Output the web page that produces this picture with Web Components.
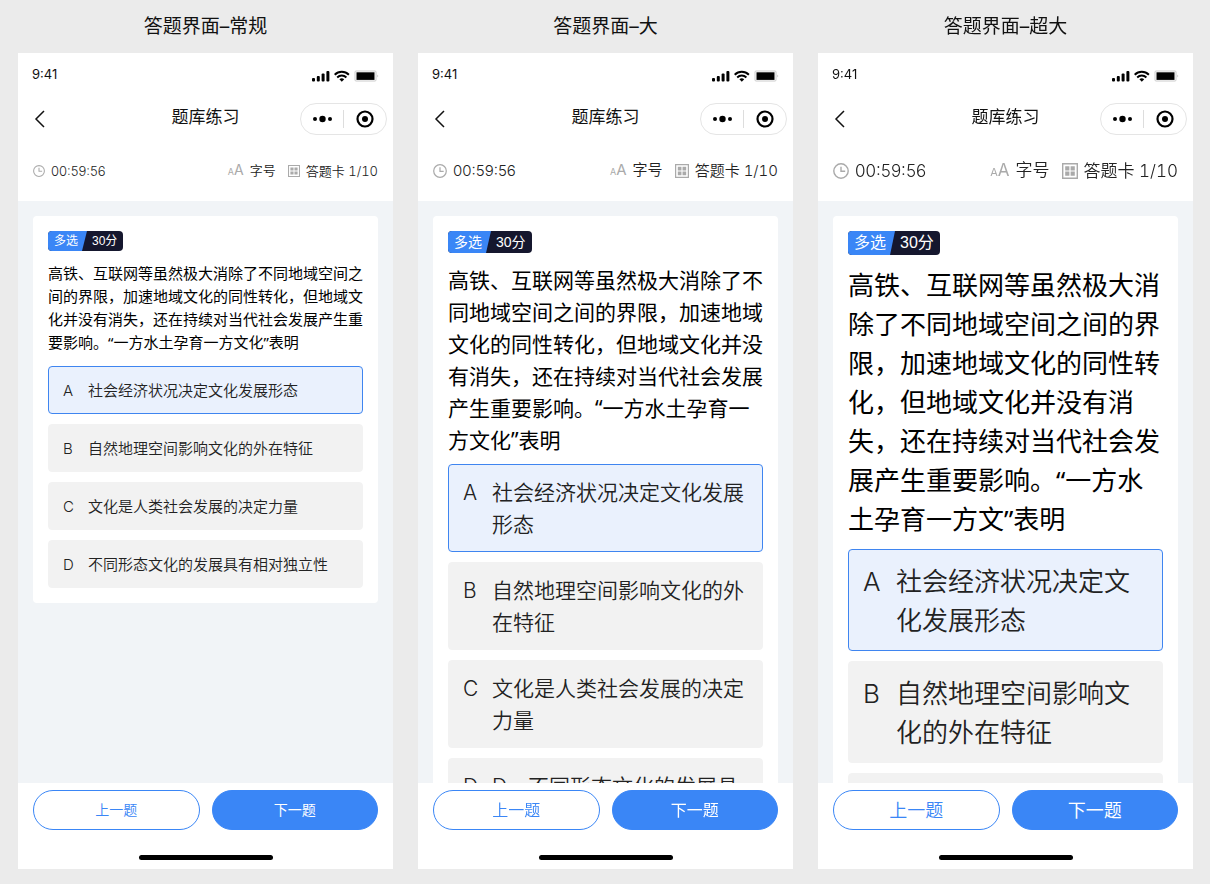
<!DOCTYPE html>
<html lang="zh-CN">
<head>
<meta charset="UTF-8">
<meta name="viewport" content="width=device-width, initial-scale=1">
<title>题库练习</title>
<style>
  * { box-sizing: border-box; }
  body {
    margin: 0;
    height: 100vh;
    padding: 0 17px 15px 18px;
    display: grid;
    grid-template-columns: repeat(3, minmax(0, 1fr));
    gap: 25px;
    background: #ebebeb;
    color: #111;
    font-family: Inter, "Noto Sans CJK SC", sans-serif;
    text-spacing-trim: space-all;
  }
</style>
</head>
<body>

<quiz-screen size="normal">
  <span slot="caption">答题界面–常规</span>
  <span slot="question">高铁、互联网等虽然极大消除了不同地域空间之间的界限，加速地域文化的同性转化，但地域文化并没有消失，还在持续对当代社会发展产生重要影响。“一方水土孕育一方文化”表明</span>
  <quiz-option letter="A" selected>社会经济状况决定文化发展形态</quiz-option>
  <quiz-option letter="B">自然地理空间影响文化的外在特征</quiz-option>
  <quiz-option letter="C">文化是人类社会发展的决定力量</quiz-option>
  <quiz-option letter="D">不同形态文化的发展具有相对独立性</quiz-option>
</quiz-screen>

<quiz-screen size="large">
  <span slot="caption">答题界面–大</span>
  <span slot="question">高铁、互联网等虽然极大消除了不同地域空间之间的界限，加速地域文化的同性转化，但地域文化并没有消失，还在持续对当代社会发展产生重要影响。“一方水土孕育一方文化”表明</span>
  <quiz-option letter="A" selected>社会经济状况决定文化发展形态</quiz-option>
  <quiz-option letter="B">自然地理空间影响文化的外在特征</quiz-option>
  <quiz-option letter="C">文化是人类社会发展的决定力量</quiz-option>
  <quiz-option letter="D">D　不同形态文化的发展具</quiz-option>
</quiz-screen>

<quiz-screen size="xlarge">
  <span slot="caption">答题界面–超大</span>
  <span slot="question">高铁、互联网等虽然极大消除了不同地域空间之间的界限，加速地域文化的同性转化，但地域文化并没有消失，还在持续对当代社会发展产生重要影响。“一方水土孕育一方文”表明</span>
  <quiz-option letter="A" selected>社会经济状况决定文化发展形态</quiz-option>
  <quiz-option letter="B">自然地理空间影响文化的外在特征</quiz-option>
  <quiz-option letter="C"></quiz-option>
</quiz-screen>

<script>
  // Base class: renders the template returned by render() into an open root
  class BaseElement extends HTMLElement {
    constructor() {
      super();
      this.attachShadow({ mode: 'open' });
    }

    connectedCallback() {
      this.shadowRoot.innerHTML = `<style>* { box-sizing: border-box; }</style>${this.render()}`;
    }
  }

  // Phone status bar: clock, signal, wifi, battery
  class StatusBar extends BaseElement {
    render() {
      return `
        <style>
          :host {
            box-sizing: border-box;
            display: flex;
            align-items: center;
            justify-content: space-between;
            height: 44px;
            padding: 2px 14px 0;
            font-size: 13px;
            line-height: 38px;
          }
          .time { align-self: flex-start; }
          svg { display: block; }
        </style>
        <span class="time">9:41</span>
        <svg width="67" height="12" viewBox="0 0 67 12" aria-hidden="true">
          <rect x="0" y="8" width="3" height="3.5" rx="1"/>
          <rect x="4.8" y="6" width="3" height="5.5" rx="1"/>
          <rect x="9.6" y="3.5" width="3" height="8" rx="1"/>
          <rect x="14.4" y="1" width="3" height="10.5" rx="1"/>
          <g fill="none" stroke="#000" stroke-width="2">
            <path d="M22.7 4.7a10.3 10.3 0 0 1 14.2 0"/>
            <path d="M25.2 7.4a6.7 6.7 0 0 1 9.2 0"/>
          </g>
          <path d="M27.4 9.2a3.6 3.6 0 0 1 4.8 0L29.8 11.7z"/>
          <rect x="43" y="1" width="21" height="10" rx="1" fill="#fff" stroke="#ccc"/>
          <rect x="44.5" y="2.3" width="18" height="7.6"/>
          <path d="M65.5 4.5q1.5 1.5 0 3z" fill="#aaa"/>
        </svg>
      `;
    }
  }
  customElements.define('status-bar', StatusBar);

  // Title bar with back arrow and the mini program capsule
  class NavBar extends BaseElement {
    render() {
      return `
        <style>
          :host {
            display: grid;
            grid-template-columns: 1fr auto 1fr;
            align-items: center;
            height: 44px;
            padding: 0 6px;
          }
          button { border: 0; padding: 0; background: none; display: flex; align-items: center; justify-content: center; }
          .back { width: 32px; height: 32px; }
          h2 { margin: 0; font-size: 17px; line-height: 40px; font-weight: 400; align-self: start; }
          .capsule {
            justify-self: end;
            display: flex;
            align-items: center;
            width: 87px;
            height: 32px;
            border: 1px solid #e5e5e5;
            border-radius: 16px;
          }
          .capsule button { flex: 1; height: 30px; }
          .capsule i { width: 1px; height: 18px; background: #ddd; }
        </style>
        <button class="back" aria-label="返回">
          <svg width="16" height="18" viewBox="0 0 16 18" fill="none" stroke="#111" stroke-width="1.5"><path d="M12 1 4 9l8 8"/></svg>
        </button>
        <h2><slot></slot></h2>
        <div class="capsule">
          <button aria-label="更多">
            <svg width="20" height="8" viewBox="0 0 20 8"><circle cx="3" cy="4" r="2"/><circle cx="10.5" cy="4" r="3.2"/><circle cx="18" cy="4" r="2"/></svg>
          </button>
          <i></i>
          <button aria-label="关闭">
            <svg width="18" height="18" viewBox="0 0 18 18"><circle cx="9" cy="9" r="7.5" fill="none" stroke="#000" stroke-width="2.2"/><circle cx="9" cy="9" r="3"/></svg>
          </button>
        </div>
      `;
    }
  }
  customElements.define('nav-bar', NavBar);

  // Timer, font size switch and answer card link
  class QuizToolbar extends BaseElement {
    render() {
      return `
        <style>
          :host {
            display: flex;
            align-items: center;
            gap: 12px;
            height: 60px;
            padding: 0 15px;
            font-size: var(--bar-size);
            line-height: 24px;
            font-weight: 350;
            color: #222;
          }
          .item, button {
            display: flex;
            align-items: center;
            gap: 6px;
            white-space: nowrap;
          }
          .item { margin-right: auto; }
          button { border: 0; padding: 0; background: none; font: inherit; color: inherit; }
          .size { align-items: baseline; }
          svg { width: var(--icon-size); height: var(--icon-size); color: #aaa; }
          .aa { color: #aaa; font-size: var(--aa-big); font-weight: 400; }
          .aa small { font-size: var(--aa-small); }
          .count { font-variant-numeric: tabular-nums; }
        </style>
        <span class="item">
          <svg viewBox="0 0 16 16" fill="none" stroke="currentColor" stroke-width="1.4"><circle cx="8" cy="8" r="7.2"/><path d="M8 3.8V8.3h4.2"/></svg>
          <time>00:59:56</time>
        </span>
        <button class="size">
          <span class="aa" aria-hidden="true"><small>A</small>A</span>
          字号
        </button>
        <button>
          <svg viewBox="0 0 16 16"><path d="M.7.7h14.6v14.6H.7z" fill="none" stroke="currentColor" stroke-width="1.4"/><path d="M3.2 3.2h4.2v4.2h-4.2zM8.6 3.2h4.2v4.2h-4.2zM3.2 8.6h4.2v4.2h-4.2zM8.6 8.6h4.2v4.2h-4.2z" fill="currentColor"/></svg>
          <span class="count">答题卡 1/10</span>
        </button>
      `;
    }
  }
  customElements.define('quiz-toolbar', QuizToolbar);

  // Question type and score label
  class ScoreTag extends BaseElement {
    render() {
      return `
        <style>
          :host {
            display: flex;
            width: fit-content;
            height: var(--tag-height);
            line-height: var(--tag-height);
            border-radius: 4px;
            overflow: hidden;
            background: #15172e;
            color: #fff;
            font-family: "Liberation Sans", "Noto Sans CJK SC", sans-serif;
            font-size: var(--tag-size);
          }
          .type {
            padding: 0 9px 0 6px;
            background: #3a86f6;
            clip-path: polygon(0 0, 100% 0, calc(100% - 5px) 100%, 0 100%);
          }
          .score { padding: 0 6px 0 5px; }
        </style>
        <span class="type">${this.getAttribute('type')}</span>
        <span class="score">${this.getAttribute('score')}</span>
      `;
    }
  }
  customElements.define('score-tag', ScoreTag);

  class QuizOption extends BaseElement {
    render() {
      const selected = this.hasAttribute('selected');
      return `
        <style>
          :host { display: block; }
          button {
            display: grid;
            grid-template-columns: var(--letter-width) 1fr;
            width: 100%;
            padding: 12px 14px 10px;
            border: 1px solid #f2f2f2;
            border-radius: 4px;
            background: #f2f2f2;
            color: #222;
            font-family: inherit;
            font-size: var(--text-size);
            font-weight: 350;
            line-height: var(--option-line);
            text-align: left;
          }
          button[aria-pressed="true"] { background: #eaf1fd; border-color: #3f85f0; }
        </style>
        <button aria-pressed="${selected}"><span>${this.getAttribute('letter')}</span><span><slot></slot></span></button>
      `;
    }
  }
  customElements.define('quiz-option', QuizOption);

  // Previous / next buttons and the home indicator
  class QuizFooter extends BaseElement {
    render() {
      return `
        <style>
          :host { display: block; padding: 7px 15px 9px; background: #fff; }
          .row { display: flex; gap: 12px; }
          button {
            flex: 1;
            height: 40px;
            padding: 0 0 2px;
            border: 1px solid #3a86f6;
            border-radius: 20px;
            background: #fff;
            color: #3a86f6;
            font-family: inherit;
            font-size: var(--button-size);
            font-weight: 350;
          }
          .next { background: #3a86f6; color: #fff; font-weight: 400; }
          .home { width: 134px; height: 5px; margin: 25px auto 0; border-radius: 3px; background: #000; }
        </style>
        <div class="row">
          <button>上一题</button>
          <button class="next">下一题</button>
        </div>
        <div class="home"></div>
      `;
    }
  }
  customElements.define('quiz-footer', QuizFooter);

  class QuizScreen extends BaseElement {
    render() {
      return `
        <style>
          :host {
            display: flex;
            flex-direction: column;
            min-width: 0;
            min-height: 0;
            --bar-size: 13px;
            --icon-size: 12px;
            --aa-small: 9px;
            --aa-big: 14px;
            --tag-size: 12px;
            --tag-height: 20px;
            --text-size: 15px;
            --question-line: 23px;
            --question-gap: 12px;
            --option-line: 24px;
            --letter-width: 25px;
            --button-size: 14px;
          }
          :host([size="large"]) {
            --bar-size: 15px;
            --icon-size: 14px;
            --aa-small: 9px;
            --aa-big: 15px;
            --tag-size: 14px;
            --tag-height: 22px;
            --text-size: 21px;
            --question-line: 32px;
            --question-gap: 8px;
            --option-line: 32px;
            --letter-width: 29px;
            --button-size: 16px;
          }
          :host([size="xlarge"]) {
            --bar-size: 17px;
            --icon-size: 16px;
            --aa-small: 11px;
            --aa-big: 17px;
            --tag-size: 16px;
            --tag-height: 24px;
            --text-size: 26px;
            --question-line: 39px;
            --question-gap: 10px;
            --option-line: 39px;
            --letter-width: 33px;
            --button-size: 18px;
          }
          h1 { margin: 0; font-size: 19px; line-height: 53px; font-weight: 400; text-align: center; }
          .phone { flex: 1; min-height: 0; display: flex; flex-direction: column; background: #fff; }
          main {
            flex: 1;
            min-height: 0;
            overflow: hidden auto;
            scrollbar-width: none;
            padding: 15px;
            background: #f1f4f7;
          }
          .card { padding: 15px; border-radius: 4px; background: #fff; }
          p {
            margin: 11px 0 var(--question-gap);
            color: #000;
            font-family: "Noto Sans", "Noto Sans CJK SC", sans-serif;
            font-size: var(--text-size);
            line-height: var(--question-line);
          }
          .options { display: flex; flex-direction: column; gap: 10px; }
        </style>
        <h1><slot name="caption"></slot></h1>
        <div class="phone">
          <status-bar></status-bar>
          <nav-bar>题库练习</nav-bar>
          <quiz-toolbar></quiz-toolbar>
          <main>
            <div class="card">
              <score-tag type="多选" score="30分"></score-tag>
              <p><slot name="question"></slot></p>
              <div class="options"><slot></slot></div>
            </div>
          </main>
          <quiz-footer></quiz-footer>
        </div>
      `;
    }
  }
  customElements.define('quiz-screen', QuizScreen);
</script>
</body>
</html>
